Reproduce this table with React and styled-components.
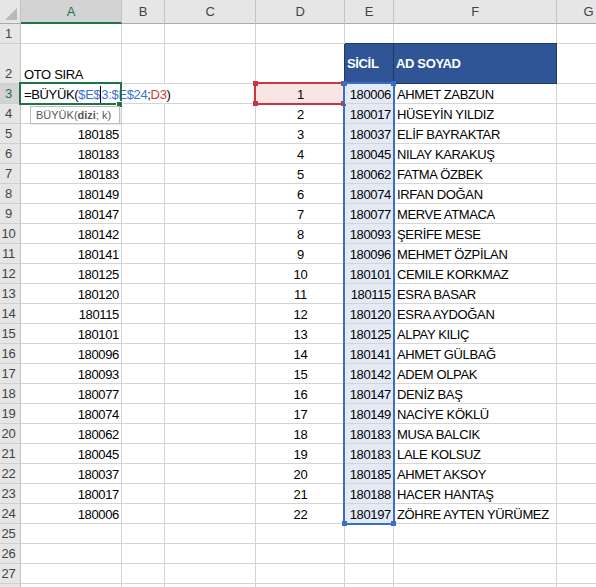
import React from "react";
import styled, { createGlobalStyle } from "styled-components";

const GREEN = "#217346";
const RED = "#c8373d";
const BLUE = "#3b6fc6";
const GRID = "#d4d4d4";
const HDR_BG = "#e6e6e6";
const HDR_SEL = "#d3d3d3";
const HDR_LINE = "#c3c3c3";

const GlobalStyle = createGlobalStyle`
  html, body { margin: 0; padding: 0; background: #fff; overflow: hidden; }
  body { font-family: "Liberation Sans", Arial, sans-serif; }
`;

const Sheet = styled.div`
  display: grid;
  grid-template-columns: 21px 101px 43px 91px 89px 49px 163px 64px;
  grid-template-rows: 24px 20px 40px repeat(26, 20px);
  width: max-content;
  font-size: 13px;
  letter-spacing: -0.35px;
  color: #000;
`;

const Corner = styled.div`
  position: relative;
  background: ${HDR_BG};
  border-right: 1px solid ${HDR_LINE};
  border-bottom: 1px solid #ababab;
  box-sizing: border-box;
  &::after {
    content: "";
    position: absolute;
    right: 3px;
    bottom: 3px;
    width: 0;
    height: 0;
    border-left: 12px solid transparent;
    border-bottom: 12px solid #b9b9b9;
  }
`;

const ColHeader = styled.div`
  box-sizing: border-box;
  display: flex;
  align-items: center;
  justify-content: center;
  background: ${(p) => (p.$active ? HDR_SEL : HDR_BG)};
  color: ${(p) => (p.$active ? GREEN : "#444")};
  border-right: 1px solid ${HDR_LINE};
  border-bottom: ${(p) => (p.$active ? `2px solid ${GREEN}` : "1px solid #ababab")};
  padding-top: ${(p) => (p.$active ? "1px" : "0")};
  line-height: 16px;
`;

const RowHeader = styled.div`
  box-sizing: border-box;
  display: flex;
  align-items: flex-end;
  justify-content: center;
  background: ${(p) => (p.$active ? HDR_SEL : HDR_BG)};
  color: ${(p) => (p.$active ? GREEN : "#444")};
  border-right: 1px solid ${HDR_LINE};
  border-bottom: 1px solid #d0d0d0;
  line-height: 16px;
  padding: 0 3px 1px 0;
  letter-spacing: -0.2px;
`;

const Cell = styled.div`
  position: relative;
  box-sizing: border-box;
  display: flex;
  align-items: ${(p) => (p.$middle ? "center" : "flex-end")};
  justify-content: ${(p) =>
    p.$align === "right" ? "flex-end" : p.$align === "center" ? "center" : "flex-start"};
  padding: 0 2px 0 3px;
  background: ${(p) => p.$fill || "transparent"};
  border-right: 1px solid ${(p) => (p.$noRight ? "transparent" : GRID)};
  border-bottom: 1px solid ${GRID};
  line-height: 16px;
  white-space: nowrap;
  overflow: visible;
  z-index: ${(p) => (p.$raise ? 3 : "auto")};
`;

const TitleCell = styled(Cell)`
  background: #2f5597;
  color: #fff;
  font-weight: bold;
  border-right-color: #1f3864;
  border-bottom-color: #1f3864;
  box-shadow: 0 -1px 0 #1f3864 ${(p) => (p.$first ? ", -1px 0 0 #1f3864" : "")};
  padding-left: 2px;
`;

const ActiveBox = styled.div`
  position: absolute;
  left: -2px;
  top: -2px;
  width: 103px;
  height: 23px;
  box-sizing: border-box;
  border: 2px solid ${GREEN};
  pointer-events: none;
  z-index: 5;
`;

const FillHandle = styled.div`
  position: absolute;
  right: -2px;
  bottom: -4px;
  width: 5px;
  height: 5px;
  background: ${GREEN};
  box-shadow: 0 0 0 1px #fff;
`;

const RangeBox = styled.div`
  position: absolute;
  left: -2px;
  top: -2px;
  box-sizing: border-box;
  border: 2px solid ${(p) => p.$color};
  pointer-events: none;
  z-index: ${(p) => p.$z};
`;

const Handle = styled.div`
  position: absolute;
  width: 5px;
  height: 5px;
  background: ${(p) => p.$color};
  ${(p) => (p.$v === "top" ? "top: -3px;" : "bottom: -3px;")}
  ${(p) => (p.$h === "left" ? "left: -3px;" : "right: -3px;")}
`;

const Formula = styled.span`
  position: relative;
  z-index: 4;
  background: #fff;
  padding-right: 1px;
`;

const Ref = styled.span`
  color: ${(p) => p.$color};
`;

const Caret = styled.span`
  display: inline-block;
  width: 1px;
  height: 17px;
  background: #000;
  vertical-align: -4px;
`;

const Tooltip = styled.div`
  position: absolute;
  left: 9px;
  top: 22px;
  width: 90px;
  height: 18px;
  box-sizing: border-box;
  background: #fff;
  border: 1px solid #bdbdbd;
  box-shadow: 1px 1px 1px rgba(0, 0, 0, 0.08);
  color: #575757;
  font-size: 11px;
  letter-spacing: 0;
  line-height: 16px;
  padding-left: 5px;
  z-index: 6;
`;

const Bold = styled.b`
  font-weight: bold;
`;

const COLS = ["A", "B", "C", "D", "E", "F", "G"];

const ASC = [
  180006, 180017, 180037, 180045, 180062, 180074, 180077, 180093, 180096, 180101, 180115,
  180120, 180125, 180141, 180142, 180147, 180149, 180183, 180183, 180185, 180188, 180197,
];
const DESC = [...ASC].reverse();
const NAMES = [
  "AHMET ZABZUN",
  "HÜSEYİN YILDIZ",
  "ELİF BAYRAKTAR",
  "NILAY KARAKUŞ",
  "FATMA ÖZBEK",
  "IRFAN DOĞAN",
  "MERVE ATMACA",
  "ŞERİFE MESE",
  "MEHMET ÖZPİLAN",
  "CEMILE KORKMAZ",
  "ESRA BASAR",
  "ESRA AYDOĞAN",
  "ALPAY KILIÇ",
  "AHMET GÜLBAĞ",
  "ADEM OLPAK",
  "DENİZ BAŞ",
  "NACİYE KÖKLÜ",
  "MUSA BALCIK",
  "LALE KOLSUZ",
  "AHMET AKSOY",
  "HACER HANTAŞ",
  "ZÖHRE AYTEN YÜRÜMEZ",
];

const PINK = "#f9e5e5";
const LBLUE = "#e3eaf6";

function Corners({ color }) {
  return (
    <>
      <Handle $color={color} $v="top" $h="left" />
      <Handle $color={color} $v="top" $h="right" />
      <Handle $color={color} $v="bottom" $h="left" />
      <Handle $color={color} $v="bottom" $h="right" />
    </>
  );
}

function EmptyRow({ n }) {
  return (
    <>
      <RowHeader>{n}</RowHeader>
      {COLS.map((c) => (
        <Cell key={c} />
      ))}
    </>
  );
}

export default function App() {
  const dataRows = [];
  for (let i = 0; i < 22; i++) {
    const r = i + 3;
    const first = i === 0;
    let aCell;
    if (first) {
      aCell = (
        <Cell $noRight $raise>
          <Formula>
            =BÜYÜK(
            <Ref $color="#3a72d4">
              $E$<Caret />3:$E$24
            </Ref>
            ;<Ref $color="#d23a3a">D3</Ref>)
          </Formula>
          <ActiveBox>
            <FillHandle />
          </ActiveBox>
          <Tooltip>
            BÜYÜK(<Bold>dizi</Bold>; k)
          </Tooltip>
        </Cell>
      );
    } else if (i === 1) {
      aCell = <Cell $align="right" />;
    } else {
      aCell = <Cell $align="right">{DESC[i]}</Cell>;
    }
    dataRows.push(
      <React.Fragment key={r}>
        <RowHeader $active={first}>{r}</RowHeader>
        {aCell}
        <Cell $noRight={first} />
        <Cell />
        <Cell $align="center" $fill={first ? PINK : undefined} $raise={first}>
          {i + 1}
          {first && (
            <RangeBox $color={RED} $z={7} style={{ width: 91, height: 23 }}>
              <Corners color={RED} />
            </RangeBox>
          )}
        </Cell>
        <Cell $align="right" $fill={LBLUE} $raise={first}>
          {ASC[i]}
          {first && (
            <RangeBox $color={BLUE} $z={6} style={{ width: 52, height: 443 }}>
              <Corners color={BLUE} />
            </RangeBox>
          )}
        </Cell>
        <Cell>{NAMES[i]}</Cell>
        <Cell />
      </React.Fragment>
    );
  }

  return (
    <>
      <GlobalStyle />
      <Sheet>
        <Corner />
        {COLS.map((c) => (
          <ColHeader key={c} $active={c === "A"}>
            {c}
          </ColHeader>
        ))}

        <EmptyRow n={1} />

        <RowHeader>2</RowHeader>
        <Cell>OTO SIRA</Cell>
        <Cell />
        <Cell />
        <Cell />
        <TitleCell $middle $first>
          SİCİL
        </TitleCell>
        <TitleCell $middle>AD SOYAD</TitleCell>
        <Cell />

        {dataRows}

        {[25, 26, 27].map((n) => (
          <EmptyRow key={n} n={n} />
        ))}
        <EmptyRow n="" />
        <EmptyRow n="" />
      </Sheet>
    </>
  );
}
